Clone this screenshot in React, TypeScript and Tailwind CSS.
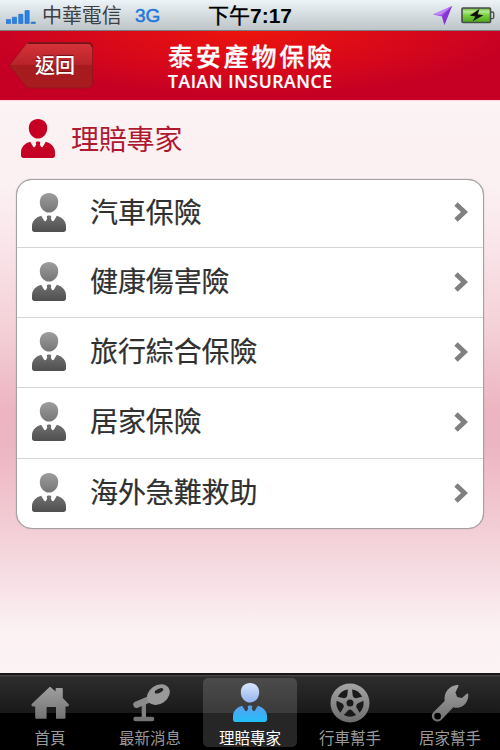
import React from "react";

type TabName = "home" | "news" | "expert" | "drive" | "house";

const rows = ["汽車保險", "健康傷害險", "旅行綜合保險", "居家保險", "海外急難救助"];

const tabs: { name: TabName; label: string }[] = [
  { name: "home", label: "首頁" },
  { name: "news", label: "最新消息" },
  { name: "expert", label: "理賠專家" },
  { name: "drive", label: "行車幫手" },
  { name: "house", label: "居家幫手" },
];

// shared gradients for all icons
const Gradients: React.FC = () => (
  <svg className="absolute h-0 w-0" aria-hidden="true">
    <defs>
      <linearGradient id="grey" x1="0" y1="0" x2="0" y2="39" gradientUnits="userSpaceOnUse">
        <stop offset="0" stopColor="#9d9d9d" />
        <stop offset="1" stopColor="#4f4f4f" />
      </linearGradient>
      <linearGradient id="tab" x1="0" y1="0" x2="0" y2="40" gradientUnits="userSpaceOnUse">
        <stop offset="0" stopColor="#a5a5a5" />
        <stop offset="1" stopColor="#6c6c6c" />
      </linearGradient>
      <linearGradient id="head" x1="0" y1="0" x2="0" y2="1">
        <stop offset="0" stopColor="#dbe6fb" />
        <stop offset="1" stopColor="#92b4f0" />
      </linearGradient>
      <linearGradient id="suit" x1="0" y1="0" x2="0" y2="1">
        <stop offset="0" stopColor="#5b9ff0" />
        <stop offset="1" stopColor="#22c0fb" />
      </linearGradient>
    </defs>
  </svg>
);

const Person: React.FC<{ head: string; body: string }> = ({ head, body }) => (
  <svg className="block h-[39px] w-[34px] shrink-0" viewBox="0 0 34 39">
    <path
      d="M17 0c5.3 0 9.2 3.7 9.2 9 0 6-4.1 10.6-9.2 10.6S7.8 15 7.8 9C7.8 3.7 11.7 0 17 0Z"
      fill={head}
    />
    <path
      d="M9.2 22.8C3.6 24.4 0 28.2 0 33.4v3.2C0 38.2 1 39 2.6 39h28.8c1.6 0 2.6-.8 2.6-2.4v-3.2c0-5.2-3.6-9-9.2-10.6L22 27.6c-.5.9-1.8.9-2.2 0l-1-2.2.5-1.8-1.1-1.2h-2.4l-1.1 1.2.5 1.8-1 2.2c-.4.9-1.7.9-2.2 0Z"
      fill={body}
    />
  </svg>
);

const TabIcon: React.FC<{ name: TabName }> = ({ name }) => {
  if (name === "expert") return <Person head="url(#head)" body="url(#suit)" />;

  return (
    <svg className="block h-10 w-10" viewBox="0 0 40 40">
      {name === "home" && (
        <path
          fill="url(#tab)"
          d="M19.3 4.2c.5-.4 1-.4 1.5 0l4.8 4.4V6.1c0-.8.4-1.2 1.2-1.2h4.8c.8 0 1.2.4 1.2 1.2v9l5.7 5.8c1 1 .2 2.6-1 2.6h-2v10.7c0 1-.5 1.5-1.5 1.5h-8V24h-9.4v11.7H6.8c-1 0-1.6-.5-1.6-1.5V23.5H3c-1.6 0-2.2-1.6-1-2.7Z"
        />
      )}
      {name === "news" && (
        <g>
          <rect x="11.7" y="20" width="4.3" height="16" fill="#818181" />
          <rect x="3.3" y="33.8" width="21" height="4.4" rx="2.2" fill="#747474" />
          <path d="M6.5 21.8 20 16" stroke="#8b8b8b" strokeWidth="6.4" strokeLinecap="round" />
          <ellipse cx="28.4" cy="11.6" rx="12.2" ry="9.4" transform="rotate(-35 28.4 11.6)" fill="#999" />
          <ellipse cx="29" cy="7.8" rx="4.6" ry="2" transform="rotate(-24 29 7.8)" fill="#232323" />
        </g>
      )}
      {name === "drive" && (
        <g>
          <circle cx="20" cy="20" r="19.5" fill="url(#tab)" />
          {[36, 108, 180, 252, 324].map((angle) => (
            <path
              key={angle}
              transform={`translate(20 20) rotate(${angle})`}
              fill="#1a1a1a"
              d="M-6.2-12.1A13.6 13.6 0 0 1 6.2-12.1L2-7.4Q0-5.8-2-7.4Z"
            />
          ))}
          <circle cx="20" cy="20" r="3.5" fill="#1a1a1a" />
        </g>
      )}
      {name === "house" && (
        <path
          fill="url(#tab)"
          fillRule="evenodd"
          d="M27.4 1.9c1-.2 1.4.6.9 1.5l-2.9 6.2 1.8 4.4 4.7 1.1 4.9-4.4c.7-.6 1.4-.3 1.5.5.5 7-4.7 13.6-11.6 13.6-1.3 0-2.4-.2-3.4-.6L12 36.2c-2.1 2.6-5.6 3.1-8.1 1.1-2.5-2.1-2.7-5.5-.5-8L14.7 17.9C13.4 9.4 19.2 2.6 27.4 1.9ZM7.6 29.7a3.4 3.4 0 1 0 0 6.8 3.4 3.4 0 0 0 0-6.8Z"
        />
      )}
    </svg>
  );
};

const StatusBar: React.FC = () => (
  <div className="flex h-[31px] items-center border-b border-[#777f83] bg-linear-to-b from-[#edf4f8] to-[#bdc5c8] pl-1.5">
    <svg className="mt-1 h-[14px] w-[30px]" viewBox="0 0 30 14">
      <g fill="#2384e5" stroke="#2369c7" strokeWidth=".6">
        <path d="M.3 9.5h4.2v4H.3ZM6.3 7.2h4.2v6.3H6.3ZM12.7 4.3h4.2v9.2h-4.2ZM19 .6h4.2v12.9H19ZM25.2 12.1h4.2v1.4h-4.2Z" />
      </g>
    </svg>
    <span className="ml-1.5 w-[93px] pt-px text-[20px] leading-none tracking-[-0.1px] text-[#3c4042]">中華電信</span>
    <span className="w-[73px] text-[19px] leading-none text-[#2378dc] [-webkit-text-stroke:0.5px_#2378dc]">3G</span>
    <span className="flex w-[224px] items-center leading-none text-black">
      <span className="text-[21px] [-webkit-text-stroke:0.4px_black]">下午</span>
      <span className="text-[21px] font-bold">7:17</span>
    </span>
    <svg className="h-5 w-[20px]" viewBox="0 0 20 20">
      <path d="M20 1 12.4 20l-2.3-8.5L1 9.5Z" fill="#a34de8" />
      <path d="m20 1-7.6 19-2.3-8.5Z" fill="#8237cf" />
      <path d="M20 1 1 9.5l8 .3Z" fill="#c18bf3" />
    </svg>
    <svg className="ml-[9px] h-[17px] w-[34px]" viewBox="0 0 34 17">
      <defs>
        <linearGradient id="battery" x1="0" y1="0" x2="0" y2="1">
          <stop offset="0" stopColor="#68b43d" />
          <stop offset=".25" stopColor="#b2ea8a" />
          <stop offset=".5" stopColor="#79cf3c" />
          <stop offset="1" stopColor="#4fa51d" />
        </linearGradient>
      </defs>
      <rect x="1" y="1" width="28.5" height="14.5" rx="1" fill="url(#battery)" stroke="#474c49" strokeWidth="1.6" />
      <path d="M30 5h1.3c1 0 1.4.5 1.4 1.4v3.8c0 .9-.4 1.4-1.4 1.4H30" fill="none" stroke="#4c5254" strokeWidth="1.4" />
      <path d="m18.5 2-9.8 6.6 5.7 1-2.8 4.7 10.8-6-5.7-1Z" fill="#101010" />
    </svg>
  </div>
);

const Header: React.FC = () => (
  <header className="flex h-[69px] items-start bg-[#c60024] bg-[radial-gradient(ellipse_270px_64px_at_50%_0%,#ec140c_0%,#db0a18_50%,#c60024_100%)]">
    <button className="ml-2 mt-[10px] grid h-[49px] w-[86px] shrink-0 place-items-center">
      <svg className="col-start-1 row-start-1 h-[49px] w-[86px]" viewBox="0 0 86 49">
        <defs>
          <linearGradient id="back" x1="0" y1="0" x2="0" y2="1">
            <stop offset="0" stopColor="#d6343a" />
            <stop offset=".49" stopColor="#b8232a" />
            <stop offset=".5" stopColor="#a61b1e" />
            <stop offset="1" stopColor="#a81c20" />
          </linearGradient>
        </defs>
        <path
          d="M22 1.5h57.5c3.3 0 5 1.7 5 5v35.5c0 3.3-1.7 5-5 5H22c-2 0-3.3-.7-4.5-2.2L2.3 25.8c-.7-1-.7-1.8 0-2.8L17.5 3.7C18.7 2.2 20 1.5 22 1.5Z"
          fill="url(#back)"
          stroke="#8e151c"
          strokeWidth=".8"
        />
        <path d="M20 2.2h60c2.5 0 4 1.5 4 4" fill="none" stroke="#721118" strokeWidth="1.4" />
      </svg>
      <span className="col-start-1 row-start-1 pl-2 text-[20px] font-medium leading-none text-white [text-shadow:0_-1px_1px_#70131a]">
        返回
      </span>
    </button>
    <h1 className="ml-[74px] mt-[13px] flex flex-col whitespace-nowrap text-white">
      <span className="text-[25px] font-medium leading-[26px] tracking-[2.8px] [-webkit-text-stroke:0.3px_white]">
        泰安產物保險
      </span>
      <span className="mt-px font-['Open_Sans','Noto_Sans',sans-serif] text-[17.5px] font-semibold leading-[21px] tracking-[0.6px] [-webkit-text-stroke:0.2px_white]">
        TAIAN INSURANCE
      </span>
    </h1>
  </header>
);

export default function App() {
  return (
    <div className="flex h-[750px] w-[500px] flex-col overflow-hidden bg-black font-['Liberation_Sans','Noto_Sans_CJK_TC',sans-serif]">
      <Gradients />
      <StatusBar />
      <Header />

      <main className="flex-1 border-t border-[#ffd6df] bg-[linear-gradient(to_bottom,#fcf3f4_0%,#fbf0f2_15%,#f9e4e9_26%,#f4d0d7_40%,#ecb5c1_54%,#ecb5c2_60%,#f2cad3_73%,#f5d8df_80%,#f8e6ea_87%,#fcf2f3_93%,#fcf3f4_100%)] px-4">
        <div className="flex h-[78px] items-center pb-[3px] pl-[5px]">
          <Person head="#c60024" body="#c60024" />
          <h2 className="ml-4 pt-1 text-[28px] leading-none tracking-[-0.2px] text-[#b01932]">理賠專家</h2>
        </div>

        <ul className="h-[350px] divide-y divide-[#d5d5d5] overflow-hidden rounded-[16px] border border-[#a5a1a3] bg-white shadow-[0_0_1px_#8d898b]">
          {rows.map((row) => (
            <li key={row} className="flex h-[70.2px] items-center pb-[2px] pl-[15px] pr-[15px] first:h-[68px] first:pb-[3px]">
              <Person head="url(#grey)" body="url(#grey)" />
              <span className="ml-[24px] flex-1 pt-[3px] text-[28px] leading-none tracking-[-0.1px] text-[#303030] [-webkit-text-stroke:0.2px_#303030]">
                {row}
              </span>
              <svg className="h-5 w-[14px]" viewBox="0 0 14 20">
                <path d="m2 2 8.5 8L2 18" fill="none" stroke="#808080" strokeWidth="4.8" />
              </svg>
            </li>
          ))}
        </ul>
      </main>

      <nav className="flex h-[77px] border-t-2 border-[#171717] bg-[linear-gradient(to_bottom,#454545_0,#454545_1px,#2d2d2d_2px,#191919_38px,#000_38px)]">
        {tabs.map((tab) => (
          <a key={tab.name} className="flex w-[100px] justify-center pt-[3px]">
            <div
              className={
                tab.name === "expert"
                  ? "flex h-[69px] w-[94px] flex-col items-center rounded-[5px] bg-white/15 pt-[5px] text-white"
                  : "flex h-[69px] w-[94px] flex-col items-center pt-[5px] text-[#999]"
              }
            >
              <div className="h-10">
                <TabIcon name={tab.name} />
              </div>
              <span className="mt-2 whitespace-nowrap text-[15.5px] leading-[16px]">{tab.label}</span>
            </div>
          </a>
        ))}
      </nav>
    </div>
  );
}
